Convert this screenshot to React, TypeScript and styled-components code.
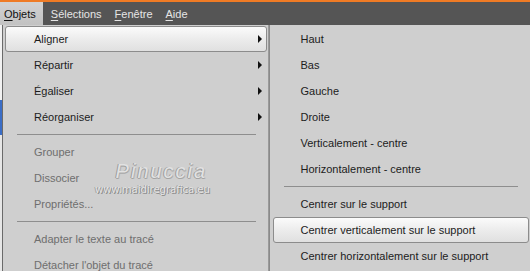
import React from "react";
import styled, { createGlobalStyle } from "styled-components";

const GlobalStyle = createGlobalStyle`
  html, body {
    margin: 0;
    padding: 0;
    background: #cfcfcf;
    overflow: hidden;
  }
  body {
    font-family: "Liberation Sans", Arial, sans-serif;
    font-size: 11px;
  }
`;

type Entry =
  | { kind: "item"; label: string; disabled?: boolean; sub?: boolean; active?: boolean }
  | { kind: "sep" };

const mainMenu: Entry[] = [
  { kind: "item", label: "Aligner", sub: true, active: true },
  { kind: "item", label: "Répartir", sub: true },
  { kind: "item", label: "Égaliser", sub: true },
  { kind: "item", label: "Réorganiser", sub: true },
  { kind: "sep" },
  { kind: "item", label: "Grouper", disabled: true },
  { kind: "item", label: "Dissocier", disabled: true },
  { kind: "item", label: "Propriétés...", disabled: true },
  { kind: "sep" },
  { kind: "item", label: "Adapter le texte au tracé", disabled: true },
  { kind: "item", label: "Détacher l'objet du tracé", disabled: true },
];

const alignMenu: Entry[] = [
  { kind: "item", label: "Haut" },
  { kind: "item", label: "Bas" },
  { kind: "item", label: "Gauche" },
  { kind: "item", label: "Droite" },
  { kind: "item", label: "Verticalement - centre" },
  { kind: "item", label: "Horizontalement - centre" },
  { kind: "sep" },
  { kind: "item", label: "Centrer sur le support" },
  { kind: "item", label: "Centrer verticalement sur le support", active: true },
  { kind: "item", label: "Centrer horizontalement sur le support" },
];

const menuBar = [
  { key: "O", rest: "bjets", open: true },
  { key: "S", rest: "élections" },
  { key: "F", rest: "enêtre" },
  { key: "A", rest: "ide" },
];

const MenuList = ({ entries, inset }: { entries: Entry[]; inset: number }) => (
  <>
    {entries.map((e, i) =>
      e.kind === "sep" ? (
        <Separator key={i} />
      ) : (
        <Item key={i} $active={!!e.active} $disabled={!!e.disabled} $inset={inset}>
          <span>{e.label}</span>
          {e.sub && <Arrow />}
        </Item>
      )
    )}
  </>
);

const App = () => {
  return (
    <Page>
      <GlobalStyle />
      <TopLine />
      <Bar>
        {menuBar.map((m) => (
          <BarItem key={m.key} $open={!!m.open}>
            <u>{m.key}</u>
            {m.rest}
          </BarItem>
        ))}
      </Bar>
      <Menus>
        <Gutter />
        <MainMenu>
          <MenuList entries={mainMenu} inset={2} />
          <Watermark>
            <Signature>Pinuccia</Signature>
            <Site>www.maidiregrafica.eu</Site>
          </Watermark>
        </MainMenu>
        <SubMenu>
          <MenuList entries={alignMenu} inset={3} />
        </SubMenu>
      </Menus>
    </Page>
  );
};

export default App;

const Page = styled.div`
  width: 530px;
  height: 271px;
  display: flex;
  flex-direction: column;
  overflow: hidden;
`;

const TopLine = styled.div`
  height: 2px;
  flex: none;
  background: #ef7b25;
`;

const Bar = styled.div`
  height: 23px;
  flex: none;
  display: flex;
  align-items: stretch;
  background: #555555;
  color: #e6e6e6;
  font-size: 11px;
`;

const BarItem = styled.div<{ $open: boolean }>`
  display: flex;
  align-items: center;
  padding: 0 ${(p) => (p.$open ? "7px" : "5px")} 0 4px;
  margin-right: 4px;
  background: ${(p) => (p.$open ? "linear-gradient(#d2d2d2, #c2c2c2)" : "transparent")};
  color: ${(p) => (p.$open ? "#111" : "#e6e6e6")};
  u {
    text-underline-offset: 2px;
  }
`;

const Menus = styled.div`
  flex: 1;
  min-height: 0;
  display: flex;
  align-items: stretch;
`;

const Gutter = styled.div`
  width: 2px;
  background: linear-gradient(#f2f2f2 0 75px, #3a6dc6 75px 110px, #e6e6e6 110px);
`;

const Panel = styled.div`
  position: relative;
  display: flex;
  flex-direction: column;
  padding-top: 1px;
  background: #cfcfcf;
  color: #1a1a1a;
`;

const MainMenu = styled(Panel)`
  width: 265px;
  border-left: 1px solid #6a6a6a;
  border-right: 1px solid #9a9a9a;
`;

const SubMenu = styled(Panel)`
  width: 261px;
  border-left: 1px solid #8a8a8a;
`;

const Item = styled.div<{ $active: boolean; $disabled: boolean; $inset: number }>`
  height: 26px;
  flex: none;
  display: flex;
  align-items: center;
  justify-content: space-between;
  box-sizing: border-box;
  margin: 0 1px 0 ${(p) => p.$inset}px;
  padding: 0 4px 0 ${(p) => 30 - p.$inset}px;
  border: 1px solid ${(p) => (p.$active ? "#8c8c8c" : "transparent")};
  border-radius: 3px;
  background: ${(p) =>
    p.$active ? "linear-gradient(#fbfbfb, #ececec 50%, #e0e0e0)" : "transparent"};
  color: ${(p) => (p.$disabled ? "#6e6e6e" : "#1c1c1c")};
`;

const Arrow = styled.i`
  width: 0;
  height: 0;
  border-top: 4px solid transparent;
  border-bottom: 4px solid transparent;
  border-left: 4px solid #111;
`;

const Separator = styled.div`
  height: 9px;
  flex: none;
  margin: 0 12px 0 14px;
  display: flex;
  align-items: center;
  &::after {
    content: "";
    flex: 1;
    height: 1px;
    background: #8e8e8e;
  }
`;

const Watermark = styled.div`
  position: absolute;
  left: 92px;
  top: 135px;
  display: flex;
  flex-direction: column;
  align-items: center;
  pointer-events: none;
`;

const Signature = styled.div`
  font-family: "Liberation Sans", sans-serif;
  font-style: italic;
  font-size: 20px;
  letter-spacing: 2px;
  padding-left: 18px;
  color: #e2e2e2;
  text-shadow: -1px 0 #9a9a9a, 0 1px #a4a4a4, 1px 1px #b4b4b4;
`;

const Site = styled.div`
  font-family: "DejaVu Sans", sans-serif;
  font-size: 10px;
  margin-top: 1px;
  color: #e4e4e4;
  text-shadow: 1px 1px #8c8c8c, -1px 0 #9c9c9c;
`;
